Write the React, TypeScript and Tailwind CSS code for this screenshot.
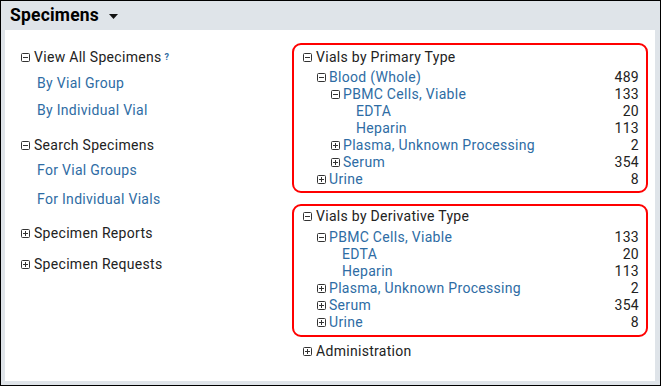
import React from "react";

const Box = ({ open }: { open: boolean }) => (
  <svg width="9" height="9" viewBox="0 0 9 9" className="shrink-0 block">
    <rect x="0.5" y="0.5" width="8" height="8" rx="1" fill="none" stroke="#333" strokeWidth="1" />
    <line x1="2" y1="4.5" x2="7" y2="4.5" stroke="#333" strokeWidth="1" />
    {!open && <line x1="4.5" y1="2" x2="4.5" y2="7" stroke="#333" strokeWidth="1" />}
  </svg>
);

type Row = { label: string; count: string; pad: number; icon?: "open" | "closed" };

const TreeRow = ({ r }: { r: Row }) => (
  <div className="flex items-center justify-between h-[17px] leading-[17px]">
    <div className="flex items-center" style={{ paddingLeft: r.pad }}>
      {r.icon && (
        <span className="mr-[3px]">
          <Box open={r.icon === "open"} />
        </span>
      )}
      <span className="text-[#2e6ca4]">{r.label}</span>
    </div>
    <span className="text-[#222]">{r.count}</span>
  </div>
);

const primary: Row[] = [
  { label: "Blood (Whole)", count: "489", pad: 14, icon: "open" },
  { label: "PBMC Cells, Viable", count: "133", pad: 28, icon: "open" },
  { label: "EDTA", count: "20", pad: 53 },
  { label: "Heparin", count: "113", pad: 53 },
  { label: "Plasma, Unknown Processing", count: "2", pad: 28, icon: "closed" },
  { label: "Serum", count: "354", pad: 28, icon: "closed" },
  { label: "Urine", count: "8", pad: 14, icon: "closed" },
];

const derivative: Row[] = [
  { label: "PBMC Cells, Viable", count: "133", pad: 14, icon: "open" },
  { label: "EDTA", count: "20", pad: 39 },
  { label: "Heparin", count: "113", pad: 39 },
  { label: "Plasma, Unknown Processing", count: "2", pad: 14, icon: "closed" },
  { label: "Serum", count: "354", pad: 14, icon: "closed" },
  { label: "Urine", count: "8", pad: 14, icon: "closed" },
];

const Head = ({ open, label, extra }: { open: boolean; label: string; extra?: React.ReactNode }) => (
  <div className="flex items-center h-[20px] leading-[20px] text-[#222]">
    <span className="mr-[4px]">
      <Box open={open} />
    </span>
    <span>{label}</span>
    {extra}
  </div>
);

const Sub = ({ label }: { label: string }) => (
  <div className="h-[20px] leading-[20px] pl-[16px] text-[#2e6ca4]">{label}</div>
);

export default function App() {
  return (
    <div
      className="w-[661px] h-[386px] border border-black bg-[#dfe4e9] flex flex-col text-[14px] tracking-[0.3px]"
      style={{ fontFamily: "Roboto, 'Liberation Sans', sans-serif" }}
    >
      <div className="h-[29px] flex items-center pl-[9px]">
        <span className="text-[17.5px] font-bold text-black leading-none tracking-[0.2px]">Specimens</span>
        <svg width="9" height="5" viewBox="0 0 9 5" className="ml-[10px] mt-[1px]">
          <path d="M0 0 L9 0 L4.5 5 Z" fill="#111" />
        </svg>
      </div>
      <div className="flex-1 bg-white ml-[4px] mr-[5px] mb-[4px] flex">
        <div className="w-[287px] pl-[16px] pt-[17px] flex flex-col">
          <Head
            open
            label="View All Specimens"
            extra={<span className="ml-[3px] text-[9px] font-bold text-[#2e6ca4] leading-none">?</span>}
          />
          <div className="mt-[6px]"><Sub label="By Vial Group" /></div>
          <div className="mt-[7px]"><Sub label="By Individual Vial" /></div>
          <div className="mt-[15px]"><Head open label="Search Specimens" /></div>
          <div className="mt-[5px]"><Sub label="For Vial Groups" /></div>
          <div className="mt-[9px]"><Sub label="For Individual Vials" /></div>
          <div className="mt-[14px]"><Head open={false} label="Specimen Reports" /></div>
          <div className="mt-[11px]"><Head open={false} label="Specimen Requests" /></div>
        </div>
        <div className="flex-1 pt-[13px] pr-[7px] flex flex-col">
          <div className="border-2 border-[#f00] rounded-[9px] pl-[9px] pr-[7px] pt-[4px] pb-[3px]">
            <div className="flex items-center h-[17px] leading-[17px] text-[#222]">
              <span className="mr-[4px]"><Box open /></span>
              <span>Vials by Primary Type</span>
            </div>
            <div className="mt-[3px]">
              {primary.map((r, i) => (
                <TreeRow key={i} r={r} />
              ))}
            </div>
          </div>
          <div className="mt-[11px] border-2 border-[#f00] rounded-[9px] pl-[9px] pr-[7px] pt-[2px] pb-[4px]">
            <div className="flex items-center h-[17px] leading-[17px] text-[#222]">
              <span className="mr-[4px]"><Box open /></span>
              <span>Vials by Derivative Type</span>
            </div>
            <div className="mt-[4px]">
              {derivative.map((r, i) => (
                <TreeRow key={i} r={r} />
              ))}
            </div>
          </div>
          <div className="mt-[4px] pl-[11px] flex items-center h-[20px] leading-[20px] text-[#222]">
            <span className="mr-[4px]"><Box open={false} /></span>
            <span>Administration</span>
          </div>
        </div>
      </div>
    </div>
  );
}
